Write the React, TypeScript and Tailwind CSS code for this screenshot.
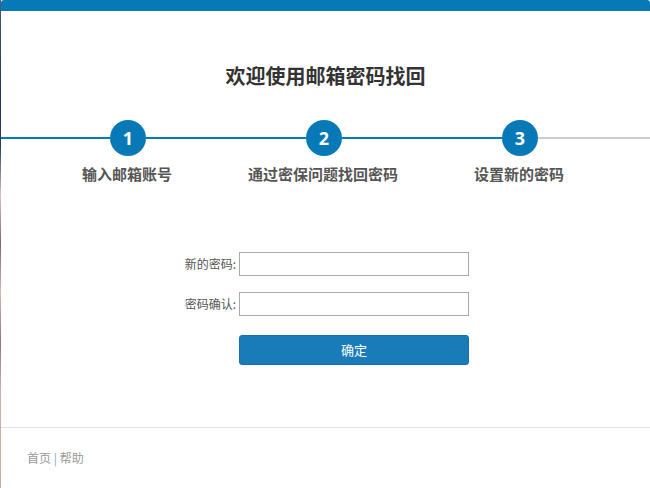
const steps = ["输入邮箱账号", "通过密保问题找回密码", "设置新的密码"];

function Circle({ n }: { n: number }) {
  return (
    <div className="grid h-[36px] w-[36px] shrink-0 place-items-center rounded-full bg-[#0779b7] font-['Open_Sans',sans-serif] text-[18px] font-bold leading-none text-white">
      {n}
    </div>
  );
}

export default function App() {
  return (
    <div className="flex h-[488px] w-[650px] overflow-hidden font-['Noto_Sans_CJK_SC','Noto_Sans',sans-serif]">
      {/* background strip peeking at left edge */}
      <div className="w-px shrink-0 bg-[linear-gradient(to_bottom,#4b5a7a_0%,#22345e_20%,#2b3d66_30%,#e0c0b8_40%,#8a607a_50%,#d8b8b0_60%,#9a7088_70%,#d0b0a8_80%,#c8b0a4_100%)]" />
      <div className="flex flex-1 flex-col rounded-t-[3px] bg-white">
        <div className="h-[11px] rounded-t-[3px] bg-[#0779b7]" />

        <h1 className="mt-[51px] text-center text-[20px] font-bold leading-[28px] text-[#333]">
          欢迎使用邮箱密码找回
        </h1>

        {/* progress */}
        <div className="mt-[30px] flex h-[36px] items-center">
          <div className="h-[2px] w-[109px] bg-[#0779b7]" />
          <Circle n={1} />
          <div className="h-[2px] w-[160px] bg-[#0779b7]" />
          <Circle n={2} />
          <div className="h-[2px] w-[160px] bg-[#0779b7]" />
          <Circle n={3} />
          <div className="h-[2px] flex-1 bg-[#cccccc]" />
        </div>
        <div className="mt-[8px] grid grid-cols-[196px_196px_196px] pl-[28px]">
          {steps.map((s) => (
            <div key={s} className="text-center text-[15px] font-bold leading-[20px] text-[#555]">
              {s}
            </div>
          ))}
        </div>

        {/* form */}
        <div className="mt-[68px] flex flex-col gap-[16px] text-[12px] text-[#555]">
          <div className="flex items-center">
            <label className="w-[235px] text-right">新的密码:</label>
            <input type="password" className="ml-[3px] h-[24px] w-[230px] border border-[#aaa] outline-none" />
          </div>
          <div className="flex items-center">
            <label className="w-[235px] text-right">密码确认:</label>
            <input type="password" className="ml-[3px] h-[24px] w-[230px] border border-[#aaa] outline-none" />
          </div>
        </div>
        <div className="mt-[19px] pl-[238px]">
          <button
            type="button"
            className="h-[30px] w-[230px] rounded-[3px] border border-[#166ea8] bg-[#1a7bb9] text-[13px] text-white"
          >
            确定
          </button>
        </div>

        <div className="flex-1" />
        <div className="h-[61px] border-t border-[#e2e2e2] pl-[26px] pt-[22px] text-[12px] leading-[16px] text-[#999]">
          <a href="#">首页</a> <span className="text-[#7aa6cc]">|</span> <a href="#">帮助</a>
        </div>
      </div>
    </div>
  );
}
